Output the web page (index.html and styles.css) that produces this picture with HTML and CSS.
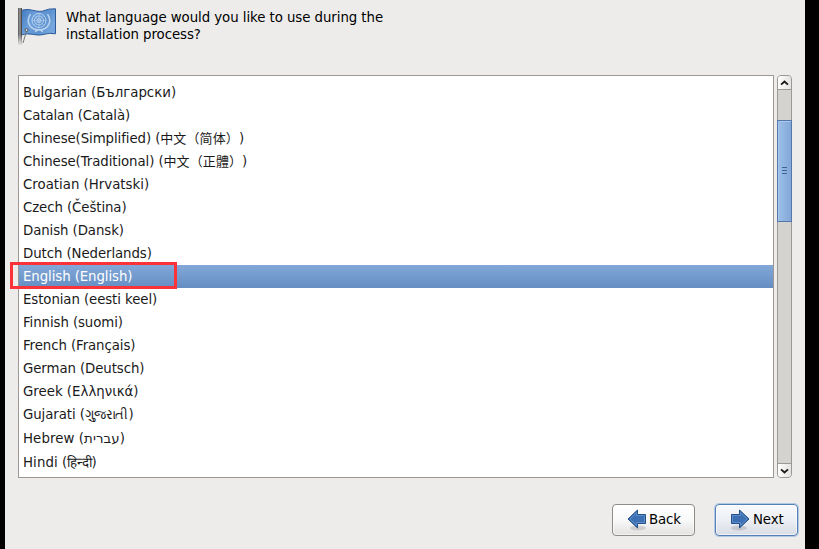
FILE: index.html
```html
<!DOCTYPE html>
<html lang="en">
<head>
<meta charset="utf-8">
<title>Installer language</title>
<link rel="stylesheet" href="styles.css">
</head>
<body>
<main class="installer">
  <header class="header">
    <svg class="flag" width="40" height="40" viewBox="0 0 40 40">
      <defs>
        <linearGradient id="cloth" x1="0" y1="0" x2="1" y2="0.4"><stop offset="0" stop-color="#3f78bd"/><stop offset=".4" stop-color="#6c9fda"/><stop offset=".75" stop-color="#5b91cf"/><stop offset="1" stop-color="#75a5dc"/></linearGradient>
        <linearGradient id="pole" x1="0" x2="1"><stop offset="0" stop-color="#555"/><stop offset=".5" stop-color="#999"/><stop offset="1" stop-color="#333"/></linearGradient>
        <linearGradient id="fade" x1="0" y1="0" x2="0" y2="1"><stop offset=".7" stop-color="#edeceb" stop-opacity="0"/><stop offset="1" stop-color="#edeceb"/></linearGradient>
      </defs>
      <path d="M3.500 3.500C11 .5 16 5 24 4.300Q31 1.200 37.500 1.800V26.800Q32 25.500 25 27.500C18 29.500 12 25 3.500 28Z" fill="url(#cloth)" stroke="#2d5b99"/>
      <g fill="none" stroke="#b9d3ee" stroke-width="1">
        <circle cx="21" cy="13.500" r="2"/><circle cx="21" cy="13.500" r="4.500"/><circle cx="21" cy="13.500" r="7"/>
        <path d="M21 6.500V20.500M14 13.500H28M16 8.500L26 18.500M26 8.500L16 18.500" stroke-width=".5"/>
        <path d="M12.500 7Q8 14 12.500 19.500Q16 23.500 21 22.500Q26 23.500 29.500 19.500Q34 14 29.500 7M17 24.500L21 22.500L25 24.500" stroke-width="1.500"/>
      </g>
      <path d="M0 1H4V38H0Z" fill="url(#pole)"/><path d="M0 0H5V39H0Z" fill="url(#fade)"/>
      <path d="M8.500 24L5 36" fill="none" stroke="#777"/>
      <circle cx="8.500" cy="23" r="1.500" fill="#ddd" stroke="#456"/>
    </svg>
    <h1 class="question">What language would you like to use during the<br>installation process?</h1>
  </header>
  <section class="picker">
    <div class="list-wrap">
      <ul class="list">
        <li class="wide">Bulgarian (Български)</li>
        <li>Catalan (Català)</li>
        <li>Chinese(Simplified) (<span class="cjk" lang="zh-CN">中文（简体）</span>)</li>
        <li>Chinese(Traditional) (<span class="cjk" lang="zh-TW">中文（正體）</span>)</li>
        <li class="wide">Croatian (Hrvatski)</li>
        <li>Czech (Čeština)</li>
        <li>Danish (Dansk)</li>
        <li>Dutch (Nederlands)</li>
        <li class="selected">English (English)<span class="marker"></span></li>
        <li>Estonian (eesti keel)</li>
        <li>Finnish (suomi)</li>
        <li>French (Français)</li>
        <li>German (Deutsch)</li>
        <li class="wide">Greek (Ελληνικά)</li>
        <li>Gujarati (<span class="indic">ગુજરાતી</span>)</li>
        <li class="tall">Hebrew (<bdi class="hebrew">עברית</bdi>)</li>
        <li class="tall">Hindi (<span class="indic">हिन्दी</span>)</li>
      </ul>
    </div>
    <div class="scrollbar">
      <div class="stepper up"><svg width="9" height="6" viewBox="0 0 9 6"><path d="M1 4.700L4.500 1.500L8 4.700"/></svg></div>
      <div class="thumb"><i></i><i></i><i></i></div>
      <div class="stepper down"><svg width="9" height="6" viewBox="0 0 9 6"><path d="M1 1.300L4.500 4.500L8 1.300"/></svg></div>
    </div>
  </section>
  <footer class="actions">
    <button class="button back">
      <svg width="20" height="22" viewBox="0 0 20 22"><ellipse class="shadow" cx="11" cy="19" rx="8" ry="2.500"/><path class="arrow" d="M1 10L10.500 1V5.500H18.500V14.500H10.500V19Z"/><path class="shine" d="M3 10L9.500 3.800V6.500H17.500V13.500H9.500V16.200Z"/></svg><span>Back</span>
    </button>
    <button class="button next">
      <svg width="20" height="22" viewBox="0 0 20 22"><ellipse class="shadow" cx="9" cy="19" rx="8" ry="2.500"/><path class="arrow" d="M19 10L9.500 1V5.500H1.500V14.500H9.500V19Z"/><path class="shine" d="M17 10L10.500 3.800V6.500H2.500V13.500H10.500V16.200Z"/></svg><span>Next</span>
    </button>
  </footer>
</main>
</body>
</html>
```
FILE: styles.css
```css
* { box-sizing: border-box; }
body {
  margin: 0;
  height: 549px;
  padding: 0 14px 0 5px;
  background: #000;
  overflow: hidden;
  font: 13.33px/17px "DejaVu Sans", "Noto Sans CJK SC", sans-serif;
  color: #1a1a1a;
}
.installer {
  height: 549px;
  padding: 7px 7px 0 13px;
  background: #edeceb;
  display: flex;
  flex-direction: column;
}
.header { display: flex; height: 68px; }
.flag { flex: none; margin-right: 8px; }
.question { margin: 2px 0 0; font-size: inherit; font-weight: 400; color: #000; letter-spacing: -.06px; }
.picker { display: flex; gap: 3px; height: 403px; }
.list-wrap { width: 756px; border: 1px solid #9b9895; background: #fff; }
.list { list-style: none; margin: 0; padding: 5px 0 0; }
.list li { height: 23px; padding-left: 4px; line-height: 23px; white-space: nowrap; letter-spacing: -.09px; }
.list .wide { letter-spacing: 0; }
.list .tall { height: 24px; line-height: 25px; letter-spacing: .08px; }
.list .selected {
  position: relative;
  color: #fff;
  background: linear-gradient(#83a8d8, #648dc2);
}
.marker {
  position: absolute;
  left: -9px;
  top: -3px;
  width: 167px;
  height: 27px;
  border: 3px solid #fb3338;
}
.cjk { font-family: "Noto Sans CJK SC", sans-serif; font-size: 13px; line-height: 1; letter-spacing: .1px; text-spacing-trim: space-all; }
.indic, .hebrew { line-height: 1; }
.scrollbar {
  width: 15px;
  border: 1px solid #9b9895;
  border-radius: 4px;
  background: #d5d3d0;
  display: flex;
  flex-direction: column;
}
.stepper {
  height: 14px;
  background: linear-gradient(90deg, #fff, #e5e3e1);
  display: grid;
  place-items: center;
}
.stepper path { fill: none; stroke: #1a1a1a; stroke-width: 1.8; }
.up { border-bottom: 1px solid #9b9895; border-radius: 3px 3px 0 0; }
.down { margin-top: auto; border-top: 1px solid #9b9895; border-radius: 0 0 3px 3px; }
.thumb {
  height: 102px;
  margin: 30px -1px 0;
  padding-bottom: 1px;
  border: 1px solid #5478aa;
  background: linear-gradient(90deg, #9dbfe9, #83a8d8);
  box-shadow: inset 1px 1px #aac8ed;
  display: flex;
  flex-direction: column;
  align-items: center;
  justify-content: center;
  gap: 2px;
}
.thumb i { width: 5px; height: 1px; background: #3f6294; }
.actions { display: flex; justify-content: flex-end; gap: 20px; margin-top: 26px; }
.button {
  width: 83px;
  height: 32px;
  padding: 0 0 1px 14px;
  border: 1px solid #8f8b87;
  border-radius: 4px;
  background: linear-gradient(#fff, #f9f9f9 50%, #e3e1e0);
  box-shadow: inset 0 0 0 1px #ffffff99;
  display: flex;
  align-items: center;
  gap: 2px;
  font: inherit;
  letter-spacing: -.1px;
  color: #000;
}
.next {
  border-color: #557fb7;
  background: linear-gradient(#f8fafd, #eceff4 50%, #d8dce4);
  box-shadow: 0 0 0 1px #b3c8e2, inset 0 0 0 1px #ffffff99;
}
.next svg { margin-right: 1px; }
.arrow { fill: #3c70b2; stroke: #244f8b; }
.shine { fill: none; stroke: #6796cf; stroke-width: .8; }
.shadow { fill: #000; opacity: .12; }
```
